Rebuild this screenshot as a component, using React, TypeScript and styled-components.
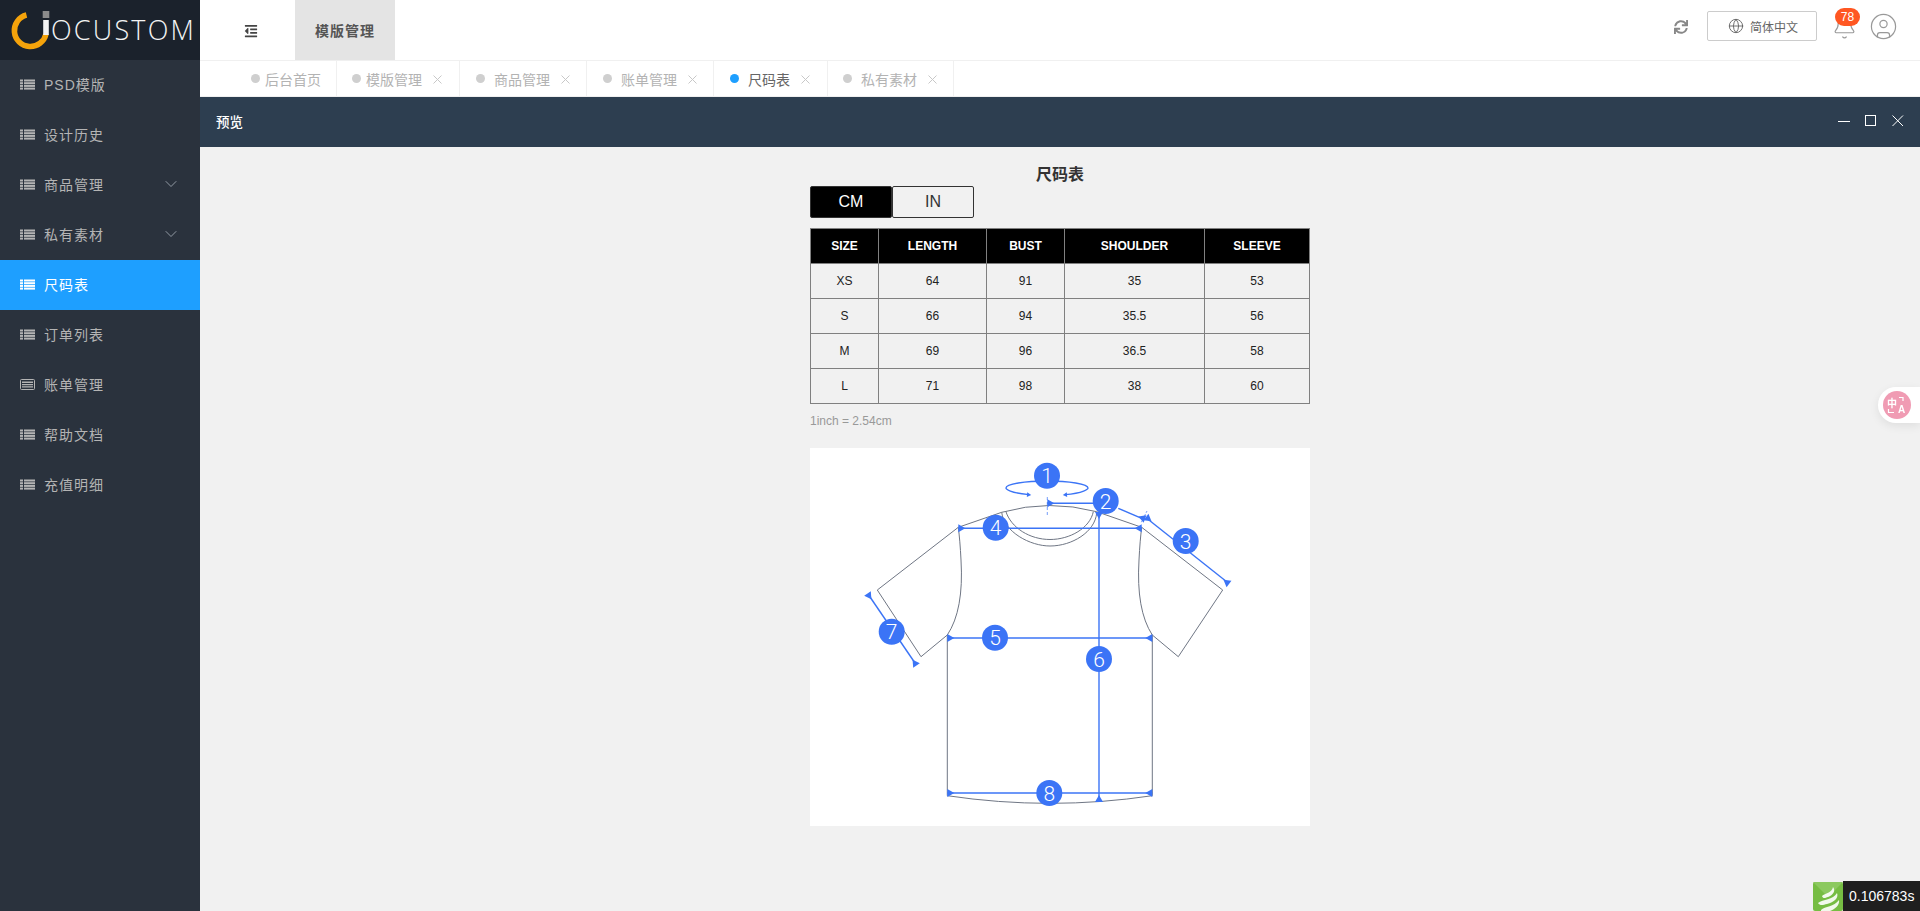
import React from "react";
import styled, { createGlobalStyle } from "styled-components";
import { FaOutdent, FaSync } from "react-icons/fa";
import { Bell, CircleUser, Globe, ChevronDown } from "lucide-react";

const FONT = `"Liberation Sans", "Noto Sans CJK SC", sans-serif`;
const BLUE = "#3b74f6";
const LINE = "#6f7684";

const Global = createGlobalStyle`
  html, body { margin: 0; padding: 0; height: 100%; overflow: hidden; background: #f1f1f1; }
  body { font-family: ${FONT}; }
  #root { height: 100%; }
  * { box-sizing: border-box; }
`;

const Shell = styled.div`
  display: grid;
  grid-template-columns: 200px 1fr;
  height: 911px;
  width: 1920px;
`;

const Sidebar = styled.aside`
  background: #2a323d;
  display: flex;
  flex-direction: column;
`;

const LogoBar = styled.div`
  height: 60px;
  background: #1b222c;
  display: flex;
  align-items: center;
  padding-left: 9px;
`;

const LogoText = styled.span`
  color: #f4f4f4;
  font-family: "Open Sans", "Liberation Sans", sans-serif;
  font-size: 27px;
  font-weight: 300;
  letter-spacing: 2.2px;
  line-height: 60px;
`;

const NavItem = styled.div<{ $active?: boolean }>`
  height: 50px;
  display: flex;
  align-items: center;
  padding: 0 19px 2px 20px;
  gap: 9px;
  font-size: 14px;
  letter-spacing: 1px;
  color: ${(p) => (p.$active ? "#ffffff" : "#b4b4b4")};
  background: ${(p) => (p.$active ? "#1e9fff" : "transparent")};
`;

const NavLabel = styled.span`
  flex: 1;
`;

const NavIcon = styled.svg`
  width: 15px;
  height: 11px;
  flex: none;
  display: block;
`;

const Main = styled.main`
  display: flex;
  flex-direction: column;
  min-width: 0;
  background: #f1f1f1;
`;

const TopBar = styled.header`
  height: 60px;
  background: #fff;
  display: flex;
  align-items: center;
  color: #555;
`;

const MenuToggle = styled.div`
  width: 95px;
  padding-left: 44px;
  display: flex;
  align-items: center;
  padding-top: 2px;
  color: #444;
`;

const ModuleTab = styled.div`
  width: 100px;
  height: 60px;
  background: #e4e4e4;
  display: flex;
  align-items: center;
  justify-content: center;
  font-size: 14px;
  font-weight: 700;
  letter-spacing: 1px;
  color: #555;
`;

const TopRight = styled.div`
  margin-left: auto;
  display: flex;
  align-items: center;
  padding: 0 22.5px 8px 0;
`;

const RefreshBox = styled.span`
  display: flex;
  color: #888;
  margin: 2px 19px 0 0;
  stroke: currentColor;
  stroke-width: 24px;
`;

const LangButton = styled.div`
  width: 110px;
  height: 30px;
  border: 1px solid #ccc;
  border-radius: 2px;
  display: flex;
  align-items: center;
  padding-left: 20px;
  gap: 6px;
  font-size: 12px;
  color: #666;
  margin-right: 14.5px;
`;

const BellBox = styled.div`
  position: relative;
  width: 25px;
  height: 25px;
  margin: 3px 12px 0 0;
  color: #999;
`;

const Badge = styled.span`
  position: absolute;
  left: 3.5px;
  top: -7px;
  width: 25px;
  height: 18px;
  border-radius: 9px;
  background: #ff5722;
  color: #fff;
  font-size: 12px;
  line-height: 18px;
  text-align: center;
`;

const UserBox = styled.span`
  display: flex;
  color: #999;
`;

const TabBar = styled.nav`
  height: 37px;
  background: #fff;
  border-top: 1px solid #f0f0f0;
  border-bottom: 1px solid #f0f0f0;
  display: flex;
  padding-left: 36px;
`;

const Tab = styled.div<{ $gap: number; $pad: number; $right: number; $active?: boolean }>`
  display: flex;
  align-items: center;
  padding: 0 ${(p) => p.$right}px 0 ${(p) => p.$pad}px;
  border-right: 1px solid #f0f0f0;
  font-size: 14px;
  color: ${(p) => (p.$active ? "#666" : "#b3b3b3")};
  --dot-gap: ${(p) => p.$gap}px;
`;

const Dot = styled.i<{ $active?: boolean }>`
  width: 9px;
  height: 9px;
  border-radius: 50%;
  background: ${(p) => (p.$active ? "#1e9fff" : "#cfcfcf")};
  margin-right: var(--dot-gap);
`;

const CloseMark = styled.svg`
  width: 9px;
  height: 9px;
  margin-left: 11px;
  margin-top: 2px;
`;

const PreviewBar = styled.div`
  height: 50px;
  background: #2d3e50;
  color: #fff;
  display: flex;
  align-items: center;
  padding: 0 16px 2px 16px;
  font-size: 13.5px;
  font-weight: 500;
`;

const WindowButtons = styled.div`
  margin-left: auto;
  display: flex;
  align-items: center;
  gap: 15px;
`;

const Content = styled.section`
  flex: 1;
  display: flex;
  flex-direction: column;
  align-items: center;
  min-height: 0;
`;

const Sheet = styled.div`
  width: 500px;
  padding-top: 17px;
`;

const SheetTitle = styled.h2`
  margin: 0;
  height: 22px;
  line-height: 22px;
  font-size: 16px;
  font-weight: 700;
  color: #333;
  text-align: center;
`;

const Units = styled.div`
  display: flex;
  margin-bottom: 10px;
`;

const Unit = styled.div<{ $on?: boolean }>`
  width: 82px;
  height: 32px;
  border: 1px solid #333;
  border-radius: 2px;
  background: ${(p) => (p.$on ? "#000" : "transparent")};
  color: ${(p) => (p.$on ? "#fff" : "#333")};
  font-size: 16px;
  line-height: 30px;
  text-align: center;
`;

const SizeTable = styled.table`
  width: 499px;
  border-collapse: collapse;
  table-layout: fixed;
  font-size: 12px;
`;

const Head = styled.th`
  height: 35px;
  padding: 0;
  background: #000;
  color: #fff;
  font-weight: 700;
  border: 1px solid #808080;
`;

const Cell = styled.td`
  height: 35px;
  padding: 0;
  color: #222;
  text-align: center;
  border: 1px solid #808080;
`;

const Note = styled.p`
  margin: 10px 0 0;
  height: 24px;
  font-size: 12px;
  line-height: 14px;
  color: #999;
`;

const Diagram = styled.div`
  height: 378px;
  background: #fff;
  margin-top: 10px;
`;

const DiagramSvg = styled.svg`
  display: block;
  width: 500px;
  height: 378px;
`;

const TranslateWidget = styled.div`
  position: fixed;
  right: 0;
  top: 387px;
  width: 42px;
  height: 36px;
  background: #fff;
  border-radius: 18px 0 0 18px;
  box-shadow: 0 3px 10px rgba(0, 0, 0, 0.08);
  display: flex;
  align-items: center;
  padding-left: 5px;
`;

const TranslateBadge = styled.svg`
  width: 28px;
  height: 28px;
  display: block;
`;

const TimerBox = styled.div`
  position: fixed;
  right: 0;
  bottom: 0;
  height: 30px;
  display: flex;
`;

const TimerLogo = styled.svg`
  width: 30px;
  height: 29px;
  margin-top: 1px;
  display: block;
`;

const TimerText = styled.span`
  width: 77px;
  background: #1f1f1f;
  color: #fff;
  font-size: 14px;
  line-height: 30px;
  padding-left: 6px;
`;

const navItems = [
  { label: "PSD模版" },
  { label: "设计历史" },
  { label: "商品管理", arrow: true },
  { label: "私有素材", arrow: true },
  { label: "尺码表", active: true },
  { label: "订单列表" },
  { label: "账单管理", bill: true },
  { label: "帮助文档" },
  { label: "充值明细" },
];

const tabs = [
  { label: "后台首页", gap: 5, pad: 15, right: 15, closable: false },
  { label: "模版管理", gap: 5, pad: 15, right: 17, closable: true },
  { label: "商品管理", gap: 9, pad: 16, right: 16, closable: true },
  { label: "账单管理", gap: 9, pad: 16, right: 16, closable: true },
  { label: "尺码表", gap: 9, pad: 16, right: 17, closable: true, active: true },
  { label: "私有素材", gap: 9, pad: 15, right: 16, closable: true },
];

const sizeCols = [68, 108, 78, 140, 105];
const sizeHeaders = ["SIZE", "LENGTH", "BUST", "SHOULDER", "SLEEVE"];
const sizeRows = [
  ["XS", "64", "91", "35", "53"],
  ["S", "66", "94", "35.5", "56"],
  ["M", "69", "96", "36.5", "58"],
  ["L", "71", "98", "38", "60"],
];

const LogoMark = () => (
  <svg width="42" height="42" viewBox="0 0 42 42" style={{ display: "block", flex: "none" }}>
    <path d="M17.5 6 A16 16 0 1 0 37 25" fill="none" stroke="#f5a30b" strokeWidth="5.6" />
    <path d="M37 11 V26" stroke="#f4f4f4" strokeWidth="5.6" fill="none" />
    <rect x="33.7" y="2" width="6.6" height="7" fill="#8b8b8b" />
  </svg>
);

const ListIcon = () => (
  <NavIcon viewBox="0 0 15 11">
    {[0.5, 3.2, 5.9, 8.6].map((y) => (
      <g key={y} fill="currentColor">
        <rect x="0" y={y} width="3" height="2" />
        <rect x="4" y={y} width="11" height="2" />
      </g>
    ))}
  </NavIcon>
);

const BillIcon = () => (
  <NavIcon viewBox="0 0 15 11">
    <rect x="0.5" y="0.5" width="14" height="10" rx="1" fill="none" stroke="currentColor" />
    <path d="M2 2.5 H13 V4 H2 Z M2 5 H13 V6.3 H2 Z M2 7.3 H13 V8.6 H2 Z" fill="currentColor" />
  </NavIcon>
);

/* base of the triangle at (x, y), tip pointing along `angle` */
const Tri = ({ x, y, angle, scale = 1 }: { x: number; y: number; angle: number; scale?: number }) => (
  <polygon
    points="0,-4 0,4 7,0"
    transform={`translate(${x} ${y}) rotate(${angle}) scale(${scale})`}
    fill={BLUE}
  />
);

const Num = ({ x, y, n }: { x: number; y: number; n: number }) => (
  <g>
    <circle cx={x} cy={y} r="13" fill={BLUE} />
    <text
      x={x}
      y={y + 7.5}
      textAnchor="middle"
      fill="#fff"
      fontSize="21"
      fontWeight="300"
      fontFamily="Roboto, sans-serif"
    >
      {n}
    </text>
  </g>
);

const ShirtDrawing = () => (
  <DiagramSvg viewBox="810 448 500 378">
    <g fill="none" stroke={LINE} strokeWidth="1">
      <path d="M958.3 527.3 L1001.7 512.3 Q1049 499 1096.7 511.7 L1141.7 527.3 L1222.7 590 L1178.3 656.7 L1152.3 635 Q1136 610 1139 560 Q1140 540 1141.7 527.3" />
      <path d="M958.3 527.3 L877.3 590 L921 656.7 L947.3 635 Q964 610 961 560 Q960 540 958.3 527.3" />
      <path d="M947.3 635 V795.7 Q1050 811 1152.3 795.7 V635" />
      <path d="M1005.7 511 C1011 528 1030 539.5 1050 539.5 C1070 539.5 1090 528 1093.3 511.7" />
      <path d="M1001.7 512.3 C1004 532 1030 546 1050 546 C1072 546 1095 532 1096.7 513" />
    </g>
    <g fill="none" stroke={BLUE} strokeWidth="1.4">
      <path d="M1029 494.6 C1010 493 1006 489 1006 488 C1006 484 1025 481 1047 481 C1069 481 1088 484 1088 488 C1088 489 1084 493 1065 494.6" />
      <path d="M1047.3 497 V515" strokeWidth="0.7" strokeDasharray="3 2" />
      <path d="M1047.3 503.3 H1105" />
      <path d="M1118.3 508.3 L1141.7 518.3" />
      <path d="M1146.7 518.3 L1226.7 581.7" />
      <path d="M958.3 528.3 H1141.7" />
      <path d="M947.3 638 H1152.3" />
      <path d="M1099 513 V800" />
      <path d="M869 595.5 L915 663" />
      <path d="M947.3 793 H1152.3" />
    </g>
    <path d="M1147 511 L1141 523" stroke={BLUE} fill="none" strokeWidth="0.7" strokeDasharray="2 1.5" />
    <Tri x={1027} y={494.6} angle={5} scale={0.6} />
    <Tri x={1067} y={494.6} angle={175} scale={0.6} />
    <Tri x={1047.3} y={503.3} angle={0} />
    <Tri x={1145} y={519} angle={200} />
    <Tri x={1146} y={517} angle={38} />
    <Tri x={1229} y={584} angle={218} />
    <Tri x={958.3} y={528.3} angle={0} />
    <Tri x={1141.7} y={528.3} angle={180} />
    <Tri x={947.3} y={638} angle={0} />
    <Tri x={1152.3} y={638} angle={180} />
    <Tri x={1099} y={512} angle={90} />
    <Tri x={1099} y={802} angle={-90} />
    <Tri x={867.5} y={593.5} angle={56} />
    <Tri x={916.5} y={665.5} angle={236} />
    <Tri x={947.3} y={793} angle={0} />
    <Tri x={1152.3} y={793} angle={180} />
    <Num x={1047} y={475.7} n={1} />
    <Num x={1105.7} y={501} n={2} />
    <Num x={1185.7} y={541} n={3} />
    <Num x={995.7} y={527.7} n={4} />
    <Num x={995} y={637.7} n={5} />
    <Num x={1099} y={659} n={6} />
    <Num x={891.7} y={631.7} n={7} />
    <Num x={1049.3} y={793} n={8} />
  </DiagramSvg>
);

export default function App() {
  return (
    <>
      <Global />
      <Shell>
        <Sidebar>
          <LogoBar>
            <LogoMark />
            <LogoText>OCUSTOM</LogoText>
          </LogoBar>
          {navItems.map((n) => (
            <NavItem key={n.label} $active={n.active}>
              {n.bill ? <BillIcon /> : <ListIcon />}
              <NavLabel>{n.label}</NavLabel>
              {n.arrow && <ChevronDown size={20} strokeWidth={1.1} color="#9aa3ad" />}
            </NavItem>
          ))}
        </Sidebar>
        <Main>
          <TopBar>
            <MenuToggle>
              <FaOutdent size={14} />
            </MenuToggle>
            <ModuleTab>模版管理</ModuleTab>
            <TopRight>
              <RefreshBox>
                <FaSync size={14} />
              </RefreshBox>
              <LangButton>
                <Globe size={16} strokeWidth={1.4} />
                简体中文
              </LangButton>
              <BellBox>
                <Bell size={25} strokeWidth={1.1} />
                <Badge>78</Badge>
              </BellBox>
              <UserBox>
                <CircleUser size={29} strokeWidth={1} />
              </UserBox>
            </TopRight>
          </TopBar>
          <TabBar>
            {tabs.map((t) => (
              <Tab key={t.label} $gap={t.gap} $pad={t.pad} $right={t.right} $active={t.active}>
                <Dot $active={t.active} />
                {t.label}
                {t.closable && (
                  <CloseMark viewBox="0 0 9 9">
                    <path d="M0.5 0.5 L8.5 8.5 M8.5 0.5 L0.5 8.5" stroke="#c8c8c8" strokeWidth="1" fill="none" />
                  </CloseMark>
                )}
              </Tab>
            ))}
          </TabBar>
          <PreviewBar>
            预览
            <WindowButtons>
              <svg width="12" height="12" viewBox="0 0 12 12">
                <path d="M0 6.5 H12" stroke="#fff" strokeWidth="1" />
              </svg>
              <svg width="12" height="12" viewBox="0 0 12 12">
                <rect x="0.5" y="0.5" width="10" height="10" fill="none" stroke="#fff" strokeWidth="1" />
              </svg>
              <svg width="12" height="12" viewBox="0 0 12 12">
                <path d="M0.5 0.5 L11 11 M11 0.5 L0.5 11" stroke="#fff" strokeWidth="1" />
              </svg>
            </WindowButtons>
          </PreviewBar>
          <Content>
            <Sheet>
              <SheetTitle>尺码表</SheetTitle>
              <Units>
                <Unit $on>CM</Unit>
                <Unit>IN</Unit>
              </Units>
              <SizeTable>
                <colgroup>
                  {sizeCols.map((w, i) => (
                    <col key={i} width={w} />
                  ))}
                </colgroup>
                <thead>
                  <tr>
                    {sizeHeaders.map((h) => (
                      <Head key={h}>{h}</Head>
                    ))}
                  </tr>
                </thead>
                <tbody>
                  {sizeRows.map((r) => (
                    <tr key={r[0]}>
                      {r.map((c, i) => (
                        <Cell key={i}>{c}</Cell>
                      ))}
                    </tr>
                  ))}
                </tbody>
              </SizeTable>
              <Note>1inch = 2.54cm</Note>
              <Diagram>
                <ShirtDrawing />
              </Diagram>
            </Sheet>
          </Content>
        </Main>
      </Shell>
      <TranslateWidget>
        <TranslateBadge viewBox="0 0 28 28">
          <circle cx="14" cy="14" r="14" fill="#f09bb3" />
          <text x="4" y="16" fontSize="10" fill="#fff" fontWeight="700" fontFamily={FONT}>
            中
          </text>
          <text x="15" y="21.5" fontSize="10" fill="#fff" fontWeight="700" fontFamily={FONT}>
            A
          </text>
          <path d="M16 6.5 H20 V10 M5.5 18 V21.5 H11" fill="none" stroke="#fff" strokeWidth="1.2" />
        </TranslateBadge>
      </TranslateWidget>
      <TimerBox>
        <TimerLogo viewBox="0 0 30 29">
          <rect width="30" height="29" rx="2" fill="#76bd43" />
          <path d="M0 0 H30 L15 15 Z" fill="#8cc95f" />
          <path d="M9 14 C12 11 19 11 20 5 C23 9 20 13 15 15 C12 16 10 17 9 14 Z" fill="#fff" opacity="0.9" />
          <path d="M5 21 C10 17 20 18 24 11 C26 16 21 20 14 22 C10 23 7 24 5 21 Z" fill="#fff" opacity="0.9" />
          <path d="M8 28 C12 24 21 25 26 18 C27 23 22 27 17 29 H8 Z" fill="#fff" opacity="0.9" />
        </TimerLogo>
        <TimerText>0.106783s</TimerText>
      </TimerBox>
    </>
  );
}
